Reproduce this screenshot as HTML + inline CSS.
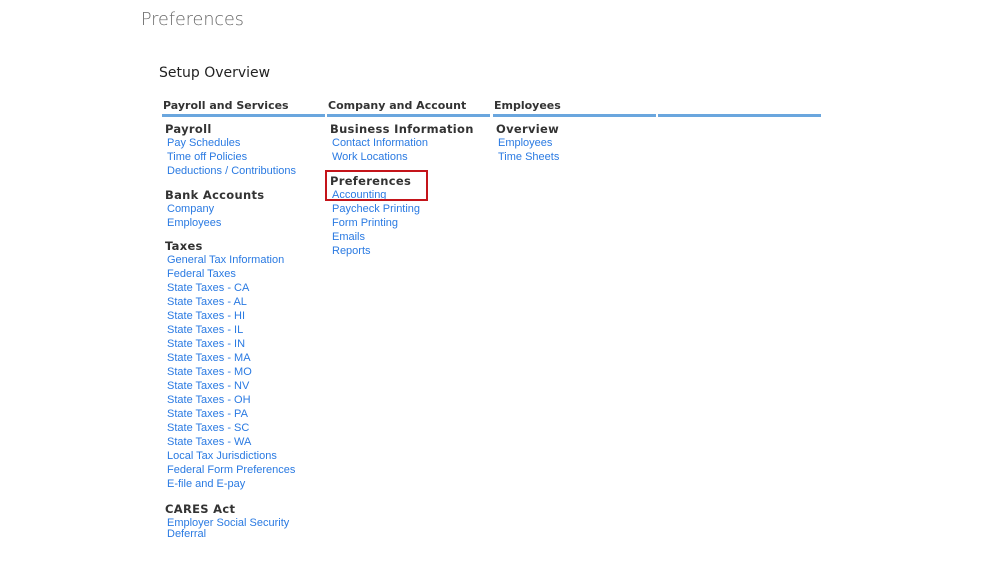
<!DOCTYPE html>
<html><head><meta charset="utf-8"><style>
body{margin:0;background:#fff;width:999px;height:562px;position:relative;overflow:hidden;font-family:"Liberation Sans",sans-serif}
.t{position:absolute;left:141px;top:10px;font-size:17.5px;color:#666;font-family:"DejaVu Sans",sans-serif;font-weight:300}
.so{position:absolute;left:159px;top:65px;font-size:14px;color:#222;font-family:"DejaVu Sans",sans-serif}
.col{position:absolute;top:98px;width:163px}
.ch{font-family:"DejaVu Sans",sans-serif;font-weight:bold;font-size:11px;color:#333;height:16px;line-height:16px;padding-top:0px;padding-left:1px;border-bottom:3px solid #6aa6de;white-space:nowrap;position:relative;top:0}
.ch span{position:relative;top:0px}
.blk{position:absolute;left:0;white-space:nowrap}
.h{font-family:"DejaVu Sans",sans-serif;font-weight:bold;font-size:11.5px;color:#333;height:14px;line-height:14px;padding-left:3px;letter-spacing:0.3px}
.a{font-size:11px;color:#2a7ae2;line-height:14px;padding-left:5px}
.box{position:absolute;left:325px;top:170px;width:99px;height:27px;border:2px solid #c4141a}
</style></head><body>
<div class="t">Preferences</div>
<div class="so">Setup Overview</div>

<div class="col" style="left:162px"><div class="ch">Payroll and Services</div>
<div class="blk" style="top:24px"><div class="h">Payroll</div><div class="a">Pay Schedules</div><div class="a">Time off Policies</div><div class="a">Deductions / Contributions</div></div>
<div class="blk" style="top:90px"><div class="h">Bank Accounts</div><div class="a">Company</div><div class="a">Employees</div></div>
<div class="blk" style="top:141px"><div class="h">Taxes</div><div class="a">General Tax Information</div><div class="a">Federal Taxes</div><div class="a">State Taxes - CA</div><div class="a">State Taxes - AL</div><div class="a">State Taxes - HI</div><div class="a">State Taxes - IL</div><div class="a">State Taxes - IN</div><div class="a">State Taxes - MA</div><div class="a">State Taxes - MO</div><div class="a">State Taxes - NV</div><div class="a">State Taxes - OH</div><div class="a">State Taxes - PA</div><div class="a">State Taxes - SC</div><div class="a">State Taxes - WA</div><div class="a">Local Tax Jurisdictions</div><div class="a">Federal Form Preferences</div><div class="a">E-file and E-pay</div></div>
<div class="blk" style="top:404px"><div class="h">CARES Act</div><div class="a" style="line-height:11px;margin-top:2px">Employer Social Security<br>Deferral</div></div>
</div>

<div class="col" style="left:327px"><div class="ch">Company and Account</div>
<div class="blk" style="top:24px"><div class="h">Business Information</div><div class="a">Contact Information</div><div class="a">Work Locations</div></div>
<div class="blk" style="top:76px"><div class="h">Preferences</div><div class="a">Accounting</div><div class="a">Paycheck Printing</div><div class="a">Form Printing</div><div class="a">Emails</div><div class="a">Reports</div></div>
</div>

<div class="col" style="left:493px"><div class="ch">Employees</div>
<div class="blk" style="top:24px"><div class="h">Overview</div><div class="a">Employees</div><div class="a">Time Sheets</div></div>
</div>

<div class="col" style="left:658px"><div class="ch">&nbsp;</div></div>
<div class="box"></div>
</body></html>
